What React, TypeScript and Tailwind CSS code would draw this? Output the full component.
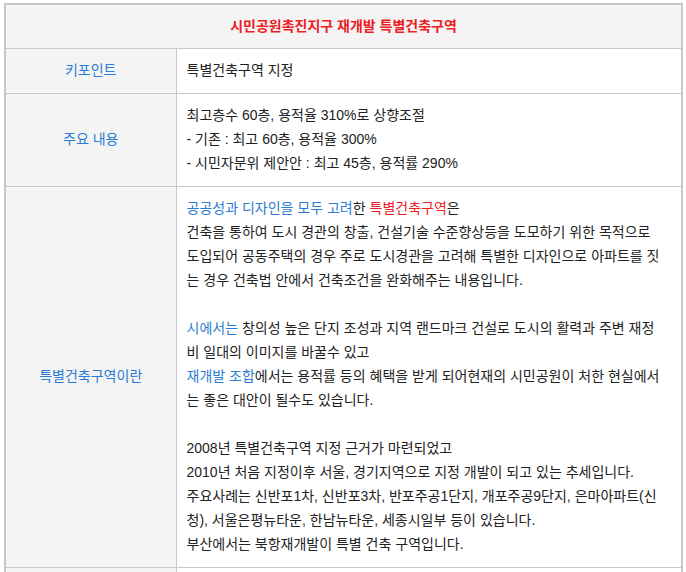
import React from "react";

const font = { fontFamily: '"Liberation Sans", "Noto Sans CJK KR", sans-serif' };

function Row({ label, children }: { label: string; children: React.ReactNode }) {
  return (
    <tr>
      <th className="w-[171px] border border-[#c8c8c8] bg-[#f4f4f4] font-normal text-[#2b7bd4] text-center align-middle pb-[2px]">
        {label}
      </th>
      <td className="border border-[#c8c8c8] bg-white px-[10px] pt-[9px] pb-[11px] text-[#222] align-top">{children}</td>
    </tr>
  );
}

const Blue = ({ children }: { children: React.ReactNode }) => <span className="text-[#2b7bd4]">{children}</span>;

export default function App() {
  return (
    <div className="bg-white w-[686px] h-[572px] overflow-hidden pt-[3px] pl-[4px]" style={font}>
      <table className="w-[679px] border-collapse border-2 border-[#c8c8c8] text-[14px] leading-[24px]">
        <tbody>
          <tr>
            <td colSpan={2} className="h-[44px] bg-[#f4f4f4] border border-[#c8c8c8] text-center font-bold text-[#ee1c25] text-[14px]">
              시민공원촉진지구 재개발 특별건축구역
            </td>
          </tr>
          <Row label="키포인트">특별건축구역 지정</Row>
          <Row label="주요 내용">
            최고층수 60층, 용적율 310%로 상향조절
            <br />- 기존 : 최고 60층, 용적율 300%
            <br />- 시민자문위 제안안 : 최고 45층, 용적률 290%
          </Row>
          <Row label="특별건축구역이란">
            <Blue>공공성과 디자인을 모두 고려</Blue>한 <span className="text-[#ee1c25]">특별건축구역</span>은
            <br />
            건축을 통하여 도시 경관의 창출, 건설기술 수준향상등을 도모하기 위한 목적으로
            <br />
            도입되어 공동주택의 경우 주로 도시경관을 고려해 특별한 디자인으로 아파트를 짓
            <br />
            는 경우 건축법 안에서 건축조건을 완화해주는 내용입니다.
            <br />
            <br />
            <Blue>시에서는</Blue> 창의성 높은 단지 조성과 지역 랜드마크 건설로 도시의 활력과 주변 재정
            <br />
            비 일대의 이미지를 바꿀수 있고
            <br />
            <Blue>재개발 조합</Blue>에서는 용적률 등의 혜택을 받게 되어현재의 시민공원이 처한 현실에서
            <br />
            는 좋은 대안이 될수도 있습니다.
            <br />
            <br />
            2008년 특별건축구역 지정 근거가 마련되었고
            <br />
            2010년 처음 지정이후 서울, 경기지역으로 지정 개발이 되고 있는 추세입니다.
            <br />
            주요사례는 신반포1차, 신반포3차, 반포주공1단지, 개포주공9단지, 은마아파트(신
            <br />
            청), 서울은평뉴타운, 한남뉴타운, 세종시일부 등이 있습니다.
            <br />
            부산에서는 북항재개발이 특별 건축 구역입니다.
          </Row>
          <Row label="">&nbsp;</Row>
        </tbody>
      </table>
    </div>
  );
}
